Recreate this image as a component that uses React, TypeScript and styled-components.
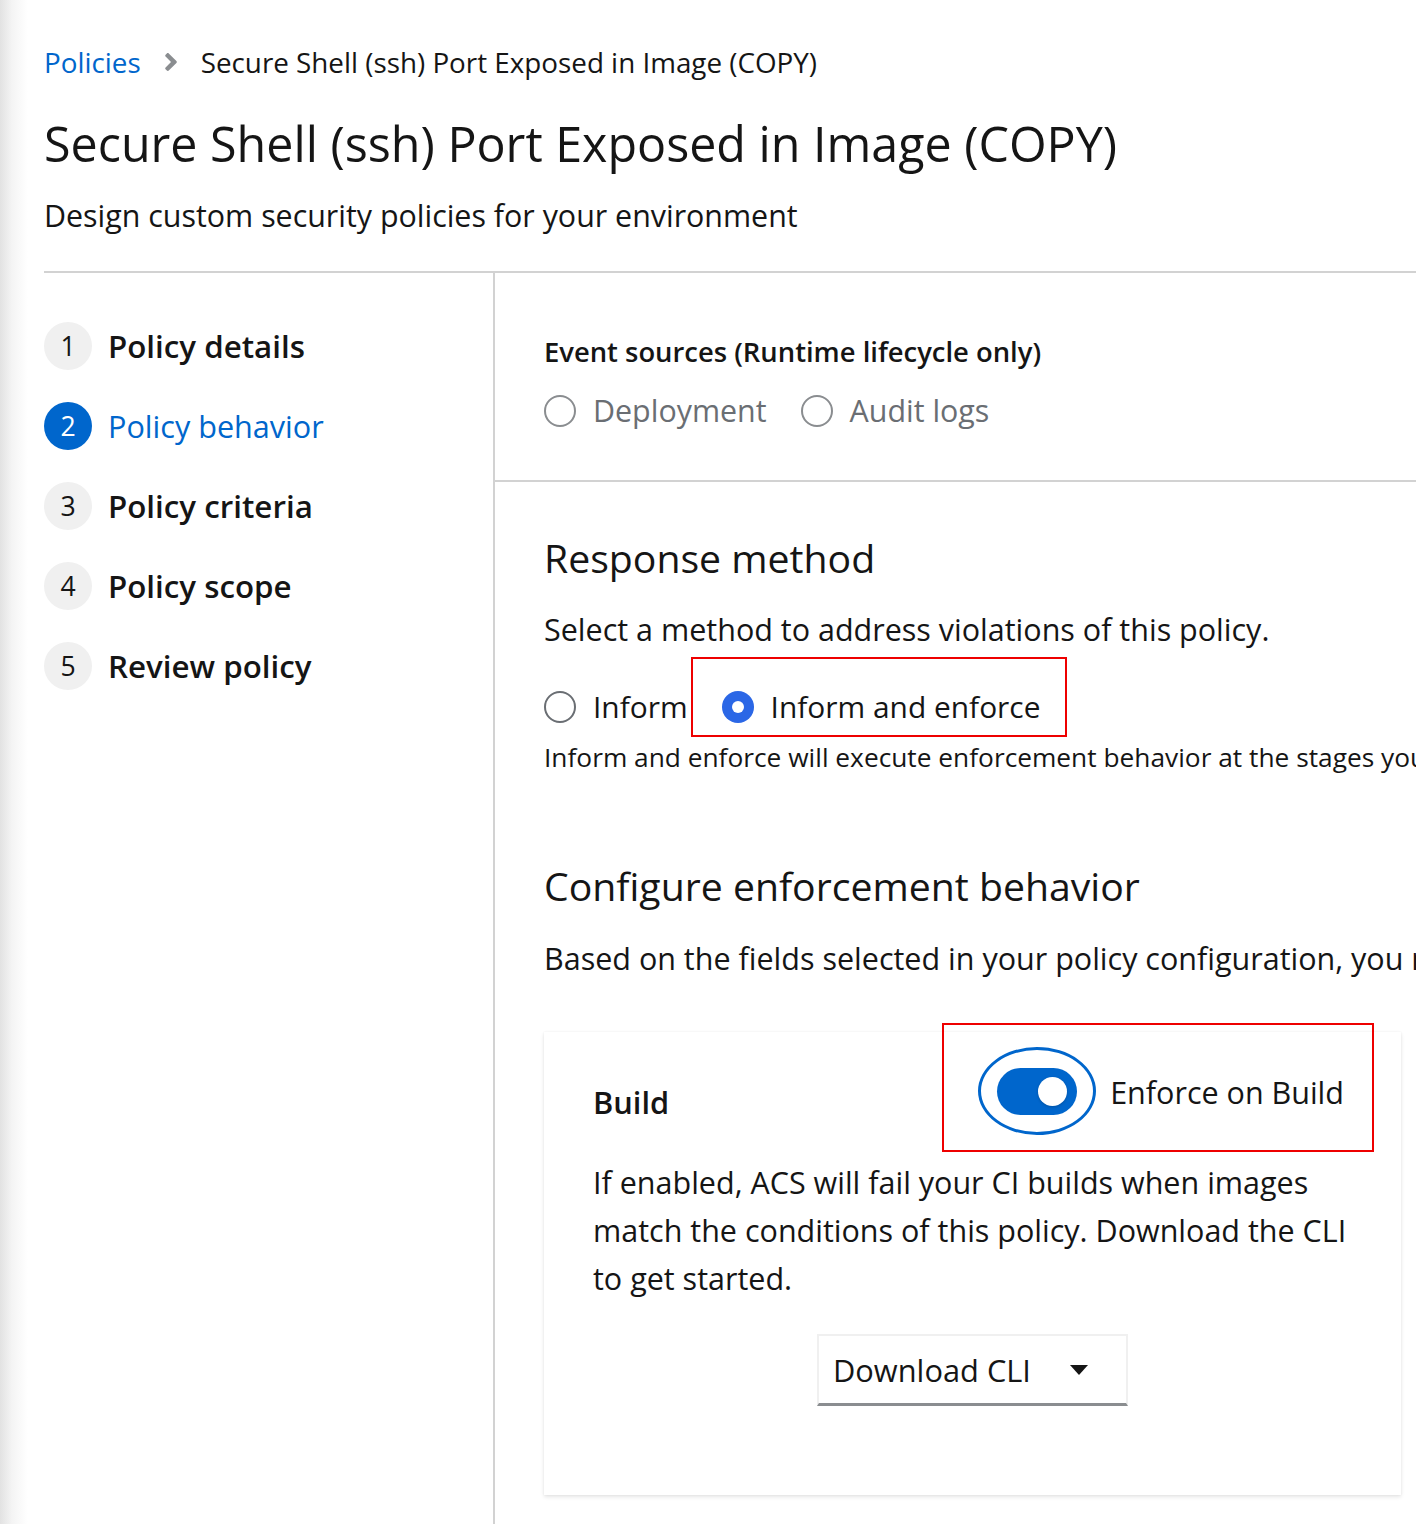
import React from "react";
import styled, { createGlobalStyle } from "styled-components";

const GlobalStyle = createGlobalStyle`
  html, body {
    margin: 0;
    padding: 0;
    background: #ffffff;
    overflow: hidden;
  }
  body {
    font-family: "Open Sans", Lato, "Liberation Sans", sans-serif;
    color: #151515;
  }
  * { box-sizing: border-box; }
`;

const Page = styled.div`
  width: 1800px;
  min-height: 1524px;
  padding: 43px 0 0 44px;
  background: linear-gradient(to right, #e2e2e2 0px, #f4f4f4 12px, #ffffff 28px);
`;

const Header = styled.header`
  display: flex;
  flex-direction: column;
  padding-bottom: 35px;
`;

const Breadcrumb = styled.nav`
  display: flex;
  align-items: center;
  font-size: 27.8px;
  line-height: 38px;
`;

const CrumbLink = styled.a`
  color: #0066cc;
  text-decoration: none;
`;

const CrumbSep = styled.span`
  display: inline-flex;
  align-items: center;
  margin: 0 24px;
  color: #8a8d90;
`;

const CrumbCurrent = styled.span`
  color: #151515;
`;

const Title = styled.h1`
  margin: 32px 0 0;
  font-size: 48.4px;
  line-height: 60px;
  font-weight: 400;
`;

const Subtitle = styled.p`
  margin: 23px 0 0;
  font-size: 30.4px;
  line-height: 40px;
`;

const Wizard = styled.div`
  display: grid;
  grid-template-columns: 451px 1fr;
  border-top: 2px solid #d2d2d2;
  min-height: 1260px;
`;

const Nav = styled.ol`
  list-style: none;
  margin: 0;
  padding: 49px 0 0;
  border-right: 2px solid #d2d2d2;
  display: flex;
  flex-direction: column;
  gap: 32px;
`;

const NavItem = styled.li`
  display: flex;
  align-items: center;
  gap: 16px;
`;

const StepNum = styled.span<{ $active?: boolean }>`
  width: 48px;
  height: 48px;
  border-radius: 50%;
  display: flex;
  align-items: center;
  justify-content: center;
  font-size: 26.6px;
  background: ${(p) => (p.$active ? "#0066cc" : "#f0f0f0")};
  color: ${(p) => (p.$active ? "#ffffff" : "#151515")};
`;

const StepLabel = styled.span<{ $active?: boolean }>`
  font-size: ${(p) => (p.$active ? 30.6 : 31.3)}px;
  line-height: 40px;
  font-weight: ${(p) => (p.$active ? 400 : 600)};
  color: ${(p) => (p.$active ? "#0066cc" : "#151515")};
`;

const Main = styled.main`
  display: flex;
  flex-direction: column;
`;

const Section = styled.section<{ $bordered?: boolean }>`
  display: flex;
  flex-direction: column;
  padding: ${(p) => (p.$bordered ? "61px 49px 49px" : "52px 49px 0")};
  border-bottom: ${(p) => (p.$bordered ? "2px solid #d2d2d2" : "none")};
  white-space: nowrap;
`;

const FieldLabel = styled.div`
  font-size: 27.4px;
  line-height: 36px;
  font-weight: 600;
`;

const RadioRow = styled.div<{ $gapTop: number }>`
  display: flex;
  align-items: center;
  gap: 34px;
  margin-top: ${(p) => p.$gapTop}px;
`;

const RadioOption = styled.label<{ $highlight?: boolean }>`
  position: relative;
  display: flex;
  align-items: center;
  gap: 17px;
  height: 40px;
  ${(p) =>
    p.$highlight
      ? `&::after {
          content: "";
          position: absolute;
          left: -31px;
          right: -27px;
          top: -30px;
          bottom: -10px;
          border: 2px solid #ee0000;
          pointer-events: none;
        }`
      : ""}
`;

const RadioCircle = styled.span<{ $checked?: boolean; $disabled?: boolean }>`
  width: 32px;
  height: 32px;
  border-radius: 50%;
  flex: none;
  display: flex;
  align-items: center;
  justify-content: center;
  border: ${(p) =>
    p.$checked ? "none" : `2px solid ${p.$disabled ? "#8a8d90" : "#6a6e73"}`};
  background: ${(p) => (p.$checked ? "#2b67e6" : "#ffffff")};
  &::after {
    content: "";
    display: ${(p) => (p.$checked ? "block" : "none")};
    width: 12px;
    height: 12px;
    border-radius: 50%;
    background: #ffffff;
  }
`;

const RadioText = styled.span<{ $disabled?: boolean }>`
  font-size: ${(p) => (p.$disabled ? 30.4 : 29.9)}px;
  line-height: 40px;
  color: ${(p) => (p.$disabled ? "#6a6e73" : "#151515")};
`;

const Heading = styled.h2<{ $mt?: number }>`
  margin: ${(p) => p.$mt ?? 0}px 0 0;
  font-size: 39.2px;
  line-height: 48px;
  font-weight: 500;
`;

const Body = styled.p<{ $mt: number }>`
  margin: ${(p) => p.$mt}px 0 0;
  font-size: 30.5px;
  line-height: 40px;
`;

const Helper = styled.p`
  margin: 12px 0 0;
  font-size: 26.3px;
  line-height: 36px;
`;

const Card = styled.div`
  margin-top: 54px;
  width: 857px;
  padding: 36px 49px 89px;
  background: #ffffff;
  box-shadow: 0 2px 4px rgba(3, 3, 3, 0.1), 0 0 2px rgba(3, 3, 3, 0.06);
  display: flex;
  flex-direction: column;
  white-space: normal;
`;

const CardHeader = styled.div`
  display: flex;
  justify-content: space-between;
  align-items: flex-start;
`;

const CardTitle = styled.div`
  margin-top: 14px;
  font-size: 30.8px;
  line-height: 40px;
  font-weight: 600;
`;

const SwitchGroup = styled.label`
  position: relative;
  display: flex;
  align-items: center;
  gap: 33px;
  margin-right: 8px;
  &::after {
    content: "";
    position: absolute;
    left: -55px;
    right: -30px;
    top: -45px;
    bottom: -37px;
    border: 2px solid #ee0000;
    pointer-events: none;
  }
`;

const SwitchTrack = styled.span`
  position: relative;
  width: 80px;
  height: 47px;
  border-radius: 24px;
  background: #0066cc;
  display: flex;
  align-items: center;
  justify-content: flex-end;
  padding-right: 10px;
  &::before {
    content: "";
    position: absolute;
    left: -19px;
    top: -21px;
    right: -19px;
    bottom: -20px;
    border: 3px solid #0066cc;
    border-radius: 50%;
  }
`;

const SwitchKnob = styled.span`
  width: 29px;
  height: 29px;
  border-radius: 50%;
  background: #ffffff;
  box-shadow: 0 1px 3px rgba(0, 0, 0, 0.2);
`;

const SwitchLabel = styled.span`
  font-size: 30.5px;
  line-height: 40px;
`;

const CardBody = styled.p`
  margin: 36px 0 0;
  font-size: 30.5px;
  line-height: 48px;
`;

const DropdownWrap = styled.div`
  display: flex;
  justify-content: center;
  margin-top: 32px;
`;

const DropdownToggle = styled.button`
  width: 311px;
  height: 72px;
  display: flex;
  align-items: center;
  justify-content: space-between;
  padding: 0 38px 0 14px;
  background: #ffffff;
  border: 2px solid #f0f0f0;
  border-bottom: 3px solid #8a8d90;
  font-family: inherit;
  font-size: 30.8px;
  color: #151515;
`;

const Caret = styled.span`
  width: 0;
  height: 0;
  border-left: 9px solid transparent;
  border-right: 9px solid transparent;
  border-top: 10px solid #151515;
`;

const steps = [
  "Policy details",
  "Policy behavior",
  "Policy criteria",
  "Policy scope",
  "Review policy",
];

export default function App() {
  return (
    <>
      <GlobalStyle />
      <Page>
        <Header>
          <Breadcrumb>
            <CrumbLink href="#">Policies</CrumbLink>
            <CrumbSep>
              <svg width="12" height="18" viewBox="24 96 208 320" fill="currentColor">
                <path d="M224.3 273l-136 136c-9.4 9.4-24.6 9.4-33.9 0l-22.6-22.6c-9.4-9.4-9.4-24.6 0-33.9l96.4-96.4-96.4-96.4c-9.4-9.4-9.4-24.6 0-33.9L54.3 103c9.4-9.4 24.6-9.4 33.9 0l136 136c9.5 9.4 9.5 24.6.1 34z" />
              </svg>
            </CrumbSep>
            <CrumbCurrent>Secure Shell (ssh) Port Exposed in Image (COPY)</CrumbCurrent>
          </Breadcrumb>
          <Title>Secure Shell (ssh) Port Exposed in Image (COPY)</Title>
          <Subtitle>Design custom security policies for your environment</Subtitle>
        </Header>
        <Wizard>
          <Nav>
            {steps.map((s, i) => (
              <NavItem key={s}>
                <StepNum $active={i === 1}>{i + 1}</StepNum>
                <StepLabel $active={i === 1}>{s}</StepLabel>
              </NavItem>
            ))}
          </Nav>
          <Main>
            <Section $bordered>
              <FieldLabel>Event sources (Runtime lifecycle only)</FieldLabel>
              <RadioRow $gapTop={21}>
                <RadioOption>
                  <RadioCircle $disabled />
                  <RadioText $disabled>Deployment</RadioText>
                </RadioOption>
                <RadioOption>
                  <RadioCircle $disabled />
                  <RadioText $disabled>Audit logs</RadioText>
                </RadioOption>
              </RadioRow>
            </Section>
            <Section>
              <Heading>Response method</Heading>
              <Body $mt={27}>Select a method to address violations of this policy.</Body>
              <RadioRow $gapTop={38}>
                <RadioOption>
                  <RadioCircle />
                  <RadioText>Inform</RadioText>
                </RadioOption>
                <RadioOption $highlight>
                  <RadioCircle $checked />
                  <RadioText>Inform and enforce</RadioText>
                </RadioOption>
              </RadioRow>
              <Helper>
                Inform and enforce will execute enforcement behavior at the stages you select below.
              </Helper>
              <Heading $mt={87}>Configure enforcement behavior</Heading>
              <Body $mt={28}>
                Based on the fields selected in your policy configuration, you may choose to apply enforcement at the following stages:
              </Body>
              <Card>
                <CardHeader>
                  <CardTitle>Build</CardTitle>
                  <SwitchGroup>
                    <SwitchTrack>
                      <SwitchKnob />
                    </SwitchTrack>
                    <SwitchLabel>Enforce on Build</SwitchLabel>
                  </SwitchGroup>
                </CardHeader>
                <CardBody>
                  If enabled, ACS will fail your CI builds when images match the conditions of this policy. Download the CLI to get started.
                </CardBody>
                <DropdownWrap>
                  <DropdownToggle type="button">
                    <span>Download CLI</span>
                    <Caret />
                  </DropdownToggle>
                </DropdownWrap>
              </Card>
            </Section>
          </Main>
        </Wizard>
      </Page>
    </>
  );
}
